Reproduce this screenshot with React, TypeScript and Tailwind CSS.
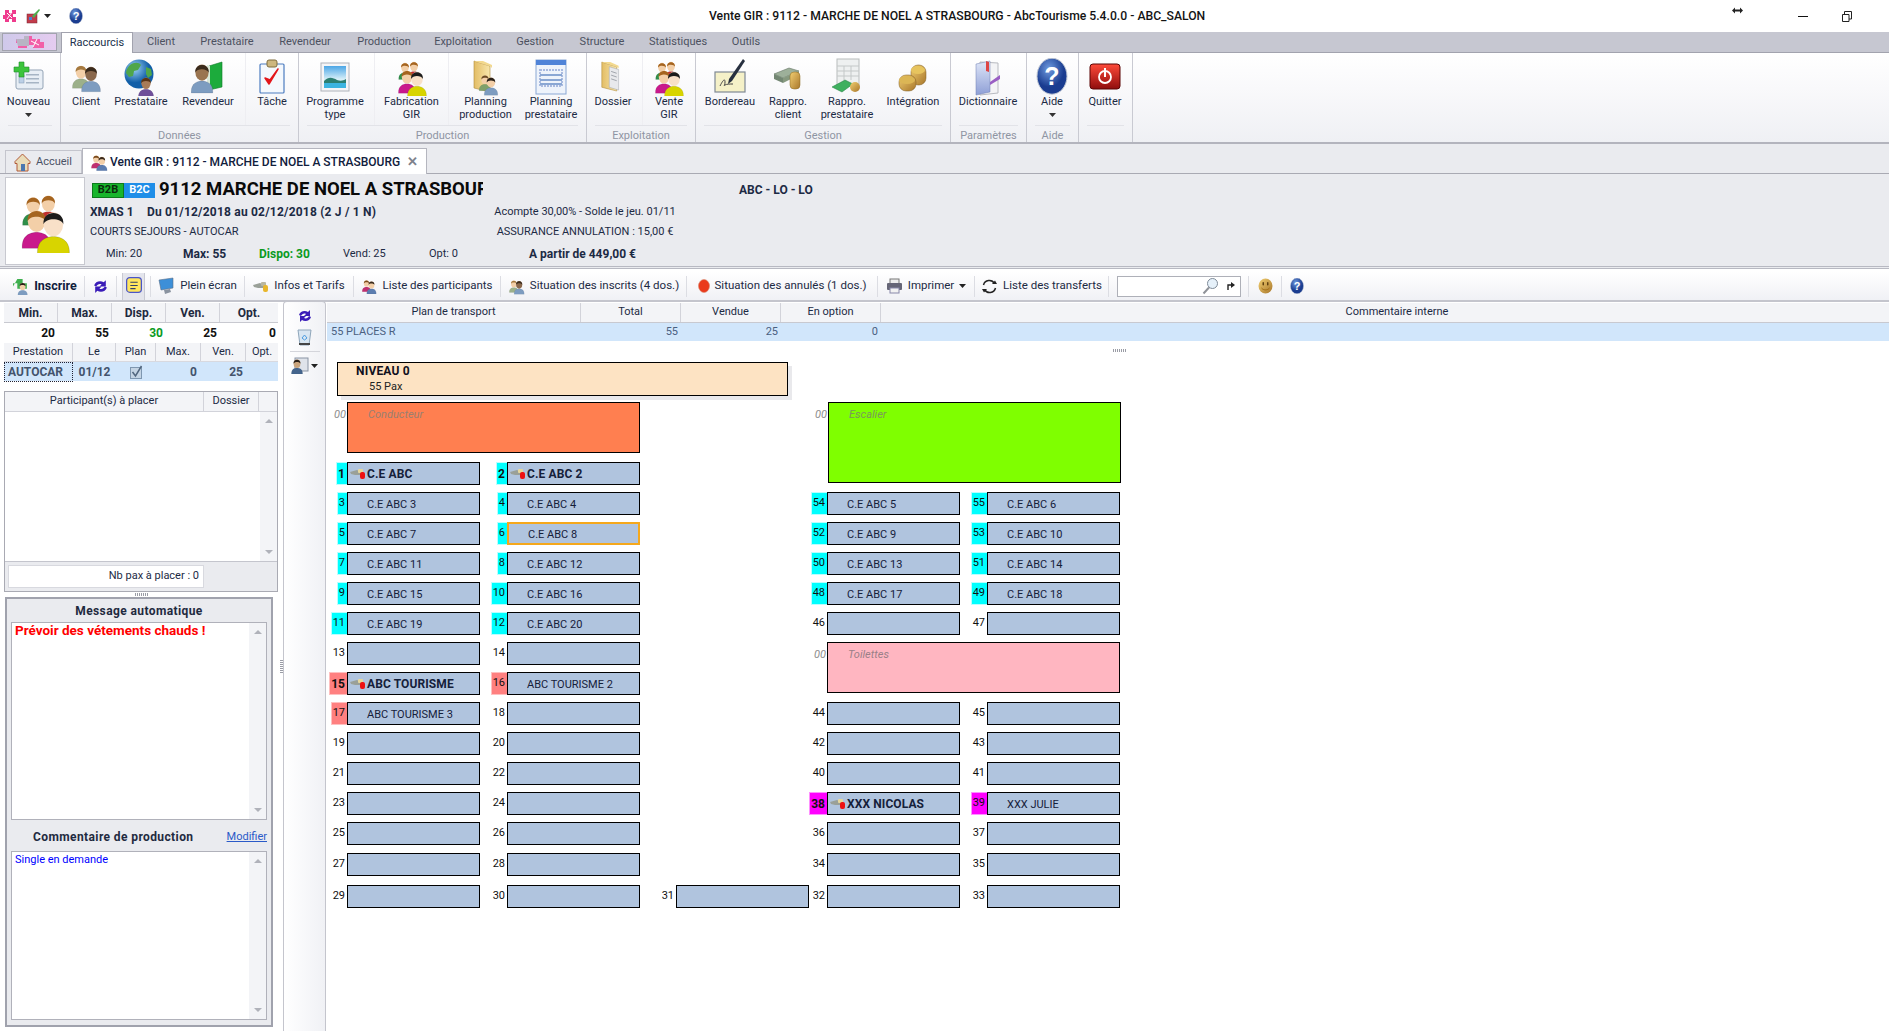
import type { ReactNode } from "react";

type P = { x: number; y: number; s?: number; shirt: string; hair: string; skin?: string };

const Person = ({ x, y, s = 1, shirt, hair, skin = "#f3cfa8" }: P) => (
  <g transform={`translate(${x} ${y}) scale(${s})`}>
    <path d="M-9 15C-9.5 7-4 5 0 5s9.500 2 9 10Z" fill={shirt} stroke="#0003" strokeWidth=".4" />
    <ellipse cx="0" cy="-2" rx="5.500" ry="6.800" fill={skin} />
    <path d="M-5.600-2C-6.500-10.500 6.500-10.500 5.600-2 4.500-5.500-4-6-5.600-2Z" fill={hair} />
  </g>
);

const Svg = ({ w = 32, h = 32, vb = "0 0 32 32", children }: { w?: number; h?: number; vb?: string; children: ReactNode }) => (
  <svg width={w} height={h} viewBox={vb} className="shrink-0">{children}</svg>
);

const IconNew = () => (
  <Svg w={32} h={32}>
    <rect x="3" y="9" width="27" height="19" rx="2" fill="#e8eef5" stroke="#93a3b5" />
    <rect x="13" y="13" width="13" height="1.500" fill="#a6b4c4" />
    <rect x="13" y="17" width="13" height="1.500" fill="#a6b4c4" />
    <rect x="13" y="21" width="13" height="1.500" fill="#a6b4c4" />
    <rect x="6" y="14" width="5" height="8" fill="#bcd0e6" stroke="#7f97b0" strokeWidth=".5" />
    <path d="M6 1h5v5h5v5h-5v5H6v-5H1V6h5Z" fill="#3cc43c" stroke="#1f8f2b" strokeWidth=".6" />
  </Svg>
);
const IconClient = ({ s = 32 }: { s?: number }) => (
  <Svg w={s} h={s}>
    <Person x={11} y={13} s={0.95} shirt="#9cb08a" hair="#a5793f" />
    <Person x={21} y={15} s={1.05} shirt="#7d9cc0" hair="#3a2a1c" skin="#8a684c" />
  </Svg>
);
const IconGlobe = () => (
  <Svg w={34} h={38} vb="0 0 34 38">
    <circle cx="15" cy="16" r="14.500" fill="url(#gGlobe)" />
    <path d="M6 7c4-3 9-3 11 0l-3 5-4 1-1 5-4 1-3-4c0-3 2-6 4-8ZM22 9l5 2 1 6-4 3-2-4Z" fill="#4fa64a" />
    <Person x={22} y={27} s={0.85} shirt="#6f4f9a" hair="#5a3416" skin="#a87b58" />
  </Svg>
);
const IconRevendeur = () => (
  <Svg w={34} h={38} vb="0 0 34 38">
    <path d="M18 8l13-4v25l-13 3Z" fill="#1cab3c" stroke="#0d7a27" strokeWidth=".6" />
    <path d="M16 7l3 1v24l-3-2Z" fill="#d8e8d8" />
    <Person x={11} y={17} s={1.2} shirt="#7d9cc0" hair="#3a2a1c" skin="#9a7450" />
  </Svg>
);
const IconTask = () => (
  <Svg w={28} h={38} vb="0 0 28 38">
    <rect x="2" y="6" width="24" height="29" rx="1" fill="#f4f8fd" stroke="#4c7cc0" strokeWidth="1.200" />
    <rect x="9" y="2" width="10" height="7" rx="2" fill="#cdb77f" stroke="#7e6c3f" />
    <path d="M7 20l4 6 9-15-8 11Z" fill="#e3161b" stroke="#e3161b" strokeWidth="1.500" strokeLinejoin="round" />
  </Svg>
);
const IconLandscape = () => (
  <Svg w={32} h={34} vb="0 0 32 34">
    <rect x="2" y="3" width="28" height="28" fill="#f5f5f7" stroke="#aeb2ba" />
    <rect x="5" y="6" width="22" height="22" fill="url(#gSky)" />
    <path d="M5 21c5-5 9-3 13-1 3 1 6 1 9-1v4H5Z" fill="#2c7f72" />
    <rect x="5" y="23" width="22" height="5" fill="#3cb4e0" />
  </Svg>
);
const IconGroup = ({ w = 32, h = 38 }: { w?: number; h?: number }) => (
  <Svg w={w} h={h} vb="0 0 32 38">
    <Person x={9} y={11} s={0.7} shirt="#2f8f4a" hair="#a5641f" />
    <Person x={18} y={10} s={0.7} shirt="#c03030" hair="#a5641f" />
    <Person x={11} y={21} s={0.95} shirt="#c9198c" hair="#a5641f" />
    <Person x={21} y={23} s={1.050} shirt="#d8d400" hair="#1c1c1c" skin="#f8e0c8" />
  </Svg>
);
const Folder = () => (
  <>
    <path d="M3 3l16 5v26L3 30Z" fill="url(#gFolder)" stroke="#b08a3a" strokeWidth=".6" />
    <path d="M3 3h9l9 4v3l-2-2Z" fill="#f3d98e" />
  </>
);
const IconFolderPeople = () => (
  <Svg w={30} h={38} vb="0 0 30 38">
    <Folder />
    <Person x={14} y={23} s={0.65} shirt="#7fa06a" hair="#6b4a22" />
    <Person x={20} y={26} s={0.75} shirt="#7d9cc0" hair="#2a2018" />
  </Svg>
);
const IconCalendar = () => (
  <Svg w={32} h={38} vb="0 0 32 38">
    <rect x="1" y="2" width="30" height="34" fill="#eef3fb" stroke="#8aa7d4" />
    <rect x="1" y="2" width="30" height="5" fill="#4f83d8" />
    <rect x="5" y="12" width="22" height="16" fill="none" stroke="#aabbe0" strokeWidth="2" strokeDasharray="2 1" />
    <rect x="5" y="16" width="22" height="2" fill="#8aa7d4" />
    <rect x="5" y="21" width="22" height="2" fill="#8aa7d4" />
    <rect x="5" y="25" width="22" height="2" fill="#8aa7d4" />
  </Svg>
);
const IconFolderDoc = () => (
  <Svg w={28} h={38} vb="0 0 30 38">
    <Folder />
    <path d="M11 8l10 3v22l-10-3Z" fill="#e8e9ec" stroke="#9ca0a8" strokeWidth=".5" />
    <path d="M13 13l6 2M13 17l6 2M13 21l6 2" stroke="#9ca0a8" />
  </Svg>
);
const IconSign = () => (
  <Svg w={34} h={38} vb="0 0 34 38">
    <rect x="2" y="14" width="30" height="20" fill="#f5f1c8" stroke="#7f8994" strokeWidth="1.200" />
    <path d="M7 28c3-6 5-8 5-4s-2 4 0 3 4-1 8-1" fill="none" stroke="#444" />
    <path d="M30 1l2 2-13 20-4 3 1-5Z" fill="#27303f" />
  </Svg>
);
const IconMoney = () => (
  <Svg w={32} h={32}>
    <path d="M2 13l15-6 10 3-16 7Z" fill="#9db09a" stroke="#637363" strokeWidth=".6" />
    <path d="M2 13l9 4v5l-9-4Z" fill="#738773" />
    <path d="M11 17l16-7v4l-16 8Z" fill="#86997f" />
    <rect x="18" y="11" width="10" height="17" rx="4" fill="url(#gGold)" stroke="#8a6a20" strokeWidth=".5" />
  </Svg>
);
const IconSheetMoney = () => (
  <Svg w={32} h={38} vb="0 0 32 38">
    <rect x="6" y="1" width="22" height="26" fill="#eef0f0" stroke="#b8bcbc" />
    <path d="M6 8h22M6 13h22M6 18h22M13 8v14M20 8v14" stroke="#c4c8c8" />
    <path d="M1 29l13-7 8 4-11 8Z" fill="#3fb05f" stroke="#1d7a3c" strokeWidth=".5" />
    <circle cx="24" cy="29" r="5" fill="url(#gGold)" />
  </Svg>
);
const IconCoins = () => (
  <Svg w={32} h={32}>
    <rect x="14" y="4" width="15" height="20" rx="7" fill="url(#gGold)" stroke="#7d5a20" strokeWidth=".5" />
    <ellipse cx="21" cy="9" rx="7" ry="4" fill="#e7c45e" />
    <rect x="2" y="14" width="17" height="16" rx="7" fill="url(#gGold)" stroke="#7d5a20" strokeWidth=".5" />
    <ellipse cx="10" cy="19" rx="8" ry="4" fill="#dcb655" />
  </Svg>
);
const IconBook = () => (
  <Svg w={32} h={38} vb="0 0 32 38">
    <path d="M8 4l18 1v30L8 37Z" fill="#f4f4f6" stroke="#b8bac0" />
    <path d="M4 6l14-3v31L4 37Z" fill="url(#gBook)" stroke="#6f7fb0" strokeWidth=".5" />
    <path d="M14 3l3 1v10l-3-1Z" fill="#dd4444" />
    <path d="M18 24l10-7v4l-10 6Z" fill="#9a5ec4" />
  </Svg>
);
const IconHelp = ({ s = 32 }: { s?: number }) => (
  <Svg w={s} h={s * 1.170} vb="0 0 32 37">
    <ellipse cx="16" cy="18" rx="15" ry="18" fill="url(#gHelp)" stroke="#c0c7d4" />
    <text x="16" y="27" textAnchor="middle" fontFamily="Liberation Sans" fontWeight="700" fontSize="25" fill="#fff">?</text>
  </Svg>
);
const IconPower = () => (
  <Svg w={32} h={28} vb="0 0 32 28">
    <rect x="1" y="1" width="30" height="25" rx="3" fill="url(#gRed)" stroke="#5a0505" />
    <circle cx="16" cy="14" r="6" fill="none" stroke="#fff" strokeWidth="1.800" />
    <path d="M16 5v9" stroke="#fff" strokeWidth="2" />
  </Svg>
);
const IconHome = () => (
  <Svg w={17} h={19} vb="0 0 17 19">
    <path d="M8.500 1L1 8.500v2h2V18h11v-7.500h2v-2Z" fill="#e9dcb8" stroke="#b05a38" />
    <rect x="7" y="11" width="4" height="7" fill="#4a78b0" />
  </Svg>
);
const IconRefresh = ({ s = 17 }: { s?: number }) => (
  <Svg w={s} h={s} vb="0 0 16 16">
    <path d="M2 7c1-4 6-5 9-3l2-2v6H7l2-2c-2-1-4 0-5 2Z" fill="#3a1cb8" />
    <path d="M14 9c-1 4-6 5-9 3l-2 2V8h6l-2 2c2 1 4 0 5-2Z" fill="#3a1cb8" />
  </Svg>
);
const IconNote = () => (
  <Svg w={18} h={20} vb="0 0 17 19">
    <rect x="1.500" y="1.500" width="14" height="14" rx="3" fill="#ffe65e" stroke="#4a55c8" strokeWidth="1.200" />
    <path d="M5 6h7M5 9h7M5 12h5" stroke="#33406a" />
  </Svg>
);
const IconMonitor = () => (
  <Svg w={17} h={18} vb="0 0 17 18">
    <path d="M1 3l14-2v10L3 13Z" fill="#3d8fd8" stroke="#5a6f88" strokeWidth=".6" />
    <path d="M6 13l6-1 1 3-6 2Z" fill="#8a93a0" />
  </Svg>
);
const IconKey = ({ red = false }: { red?: boolean }) => (
  <Svg w={16} h={11} vb="0 0 16 11">
    <path d="M0 4l7-2 4 2v3H5L1 6Z" fill="#9aa098" />
    <rect x="8" y="1" width="5" height="4" rx="1" fill={red ? "#e8d89c" : "#b9b6a0"} />
    <rect x="10" y="4" width="5" height="7" rx="2" fill={red ? "#ee1111" : "#e8b62c"} />
  </Svg>
);
const IconBadgePeople = ({ s = 16 }: { s?: number }) => (
  <Svg w={s} h={s} vb="0 0 32 32">
    <Person x={11} y={13} s={0.95} shirt="#c03070" hair="#7a4a1c" />
    <Person x={21} y={16} s={1.05} shirt="#5c7db0" hair="#3a2a1c" />
  </Svg>
);
const IconPrinter = () => (
  <Svg w={17} h={16} vb="0 0 17 16">
    <rect x="4" y="1" width="9" height="5" fill="#eee" stroke="#777" />
    <rect x="1" y="5" width="15" height="7" rx="1" fill="#667" />
    <rect x="4" y="10" width="9" height="5" fill="#f2f2f2" stroke="#88a" />
  </Svg>
);
const IconCycle = () => (
  <Svg w={17} h={17} vb="0 0 17 17">
    <path d="M2.500 7a6 6 0 0 1 11-1.500M14.500 10a6 6 0 0 1-11 1.500" fill="none" stroke="#222" strokeWidth="1.500" />
    <path d="M11 6h5l-2-3.500ZM6 11H1l2 3.500Z" fill="#222" />
  </Svg>
);
const IconSearch = () => (
  <Svg w={17} h={18} vb="0 0 17 18">
    <circle cx="10.500" cy="6.500" r="5" fill="#e6f1fa" stroke="#7f8b98" />
    <path d="M7 10.500L1.500 16.500" stroke="#8f9298" strokeWidth="2" />
  </Svg>
);
const IconGo = () => (
  <Svg w={9} h={10} vb="0 0 9 10">
    <path d="M1 9V4h3" fill="none" stroke="#222" strokeWidth="1.400" />
    <path d="M4 1l4 3-4 3Z" fill="#222" />
  </Svg>
);
const IconSmile = () => (
  <Svg w={15} h={17} vb="0 0 15 17">
    <ellipse cx="7.500" cy="8" rx="7" ry="7.500" fill="url(#gGold)" />
    <rect x="4.500" y="4" width="1.500" height="3.500" rx=".7" fill="#604010" />
    <rect x="9" y="4" width="1.500" height="3.500" rx=".7" fill="#604010" />
    <path d="M3.500 10c2 2.500 6 2.500 8 0" fill="none" stroke="#a06a10" />
  </Svg>
);
const IconTrash = () => (
  <Svg w={15} h={17} vb="0 0 15 17">
    <path d="M1 1h13l-2 15H3Z" fill="#d8e6f2" stroke="#8fa6ba" />
    <rect x="2" y="14" width="11" height="2" fill="#444" />
    <path d="M5 9l2.500-3 2.500 3-2.500 2Z" fill="none" stroke="#4a9be0" />
  </Svg>
);
const IconCard = () => (
  <Svg w={18} h={17} vb="0 0 18 17">
    <rect x="4" y="1" width="13" height="13" fill="#dfe3ea" stroke="#8a94a4" />
    <Person x={6} y={8} s={0.62} shirt="#44648c" hair="#2a2018" skin="#caa47c" />
  </Svg>
);
const IconCheck = () => (
  <Svg w={13} h={14} vb="0 0 13 14">
    <rect x=".5" y="2.500" width="11" height="11" fill="#c4d4e4" stroke="#7f97b0" />
    <path d="M2.500 7l3 4 6-10" fill="none" stroke="#51667e" strokeWidth="1.500" />
  </Svg>
);
const IconLogo = () => (
  <Svg w={16} h={16} vb="0 0 16 16">
    <path d="M3 2h4v3h3V2h4v4h-3v3h3v5h-4v-3H7v3H3v-3H1V7h2Z" fill="#ef3b8d" />
    <path d="M5 5l5 5M10 4l-5 7" stroke="#fff" />
  </Svg>
);
const IconPaint = () => (
  <Svg w={15} h={16} vb="0 0 15 16">
    <rect x="1" y="6" width="10" height="9" fill="#c23b4b" stroke="#7a2530" strokeWidth=".5" />
    <rect x="3" y="9" width="3" height="3" fill="#4f7fd0" />
    <path d="M6 8l7-7 1 1-6 8Z" fill="#4fae4f" />
  </Svg>
);
const CaretDown = ({ c = "#222" }: { c?: string }) => (
  <svg width="7" height="4" viewBox="0 0 7 4" className="shrink-0"><path d="M0 0h7L3.500 4Z" fill={c} /></svg>
);
const Grip = () => <div className="h-[3px] w-[13px] bg-[repeating-linear-gradient(90deg,#9a9ca5_0_1px,transparent_1px_2px)]" />;

const ribbonTabs = [
  ["Client", "w-[56px]"], ["Prestataire", "w-[76px]"], ["Revendeur", "w-[80px]"], ["Production", "w-[78px]"], ["Exploitation", "w-[80px]"],
  ["Gestion", "w-[64px]"], ["Structure", "w-[70px]"], ["Statistiques", "w-[82px]"], ["Outils", "w-[54px]"],
];

type RI = { l: string[]; w: string; icon: ReactNode; caret?: boolean; sep?: boolean };
const groups: { title: string; w: string; items: RI[] }[] = [
  { title: "", w: "w-[61px]", items: [{ l: ["Nouveau"], w: "w-[57px]", icon: <IconNew />, caret: true }] },
  { title: "Données", w: "w-[238px]", items: [
    { l: ["Client"], w: "w-[50px]", icon: <IconClient /> },
    { l: ["Prestataire"], w: "w-[60px]", icon: <IconGlobe /> },
    { l: ["Revendeur"], w: "w-[74px]", icon: <IconRevendeur /> },
    { l: ["Tâche"], w: "w-[53px]", icon: <IconTask />, sep: true },
  ] },
  { title: "Production", w: "w-[288px]", items: [
    { l: ["Programme", "type"], w: "w-[72px] mr-[3px]", icon: <IconLandscape /> },
    { l: ["Fabrication", "GIR"], w: "w-[74px]", icon: <IconGroup />, sep: true },
    { l: ["Planning", "production"], w: "w-[74px]", icon: <IconFolderPeople />, sep: true },
    { l: ["Planning", "prestataire"], w: "w-[58px]", icon: <IconCalendar /> },
  ] },
  { title: "Exploitation", w: "w-[109px]", items: [
    { l: ["Dossier"], w: "w-[52px] mr-[3px]", icon: <IconFolderDoc /> },
    { l: ["Vente", "GIR"], w: "w-[53px]", icon: <IconGroup />, sep: true },
  ] },
  { title: "Gestion", w: "w-[255px]", items: [
    { l: ["Bordereau"], w: "w-[68px]", icon: <IconSign /> },
    { l: ["Rappro.", "client"], w: "w-[48px]", icon: <IconMoney /> },
    { l: ["Rappro.", "prestataire"], w: "w-[70px]", icon: <IconSheetMoney /> },
    { l: ["Intégration"], w: "w-[62px]", icon: <IconCoins /> },
  ] },
  { title: "Paramètres", w: "w-[76px]", items: [{ l: ["Dictionnaire"], w: "w-[74px]", icon: <IconBook /> }] },
  { title: "Aide", w: "w-[52px]", items: [{ l: ["Aide"], w: "w-[50px]", icon: <IconHelp />, caret: true }] },
  { title: "", w: "w-[54px]", items: [{ l: ["Quitter"], w: "w-[52px]", icon: <IconPower /> }] },
];

const tools: { w: string; icon: ReactNode; label?: string; bold?: boolean; caret?: boolean; active?: boolean }[] = [
  { w: "w-[80px]", icon: <Svg w={17} h={17}><path d="M10 2h10v8h8v10H20v0H10V10H2v6Z" fill="#3fb04f" /><Person x={20} y={18} shirt="#7d9cc0" hair="#2a2018" /></Svg>, label: "Inscrire", bold: true },
  { w: "w-[32px]", icon: <IconRefresh /> },
  { w: "w-[34px]", icon: <IconNote />, active: true },
  { w: "w-[94px]", icon: <IconMonitor />, label: "Plein écran" },
  { w: "w-[109px]", icon: <IconKey />, label: "Infos et Tarifs" },
  { w: "w-[147px]", icon: <IconBadgePeople />, label: "Liste des participants" },
  { w: "w-[186px]", icon: <IconClient s={17} />, label: "Situation des inscrits (4 dos.)" },
  { w: "w-[191px]", icon: <svg width="12" height="14" viewBox="0 0 12 14"><ellipse cx="6" cy="7" rx="5.500" ry="6.500" fill="#ea3a1c" stroke="#d98a70" strokeWidth=".6" /></svg>, label: "Situation des annulés (1 dos.)" },
  { w: "w-[97px]", icon: <IconPrinter />, label: "Imprimer", caret: true },
  { w: "w-[134px]", icon: <IconCycle />, label: "Liste des transferts" },
];

type Seat = { n: number; c: number; r: number; t?: string; b?: boolean; tag?: "cyan" | "red" | "pink"; sel?: boolean };
const seats: Seat[] = [
  { n: 1, c: 1, r: 2, t: "C.E ABC", b: true, tag: "cyan" }, { n: 2, c: 2, r: 2, t: "C.E ABC 2", b: true, tag: "cyan" },
  { n: 3, c: 1, r: 3, t: "C.E ABC 3", tag: "cyan" }, { n: 4, c: 2, r: 3, t: "C.E ABC 4", tag: "cyan" },
  { n: 54, c: 4, r: 3, t: "C.E ABC 5", tag: "cyan" }, { n: 55, c: 5, r: 3, t: "C.E ABC 6", tag: "cyan" },
  { n: 5, c: 1, r: 4, t: "C.E ABC 7", tag: "cyan" }, { n: 6, c: 2, r: 4, t: "C.E ABC 8", tag: "cyan", sel: true },
  { n: 52, c: 4, r: 4, t: "C.E ABC 9", tag: "cyan" }, { n: 53, c: 5, r: 4, t: "C.E ABC 10", tag: "cyan" },
  { n: 7, c: 1, r: 5, t: "C.E ABC 11", tag: "cyan" }, { n: 8, c: 2, r: 5, t: "C.E ABC 12", tag: "cyan" },
  { n: 50, c: 4, r: 5, t: "C.E ABC 13", tag: "cyan" }, { n: 51, c: 5, r: 5, t: "C.E ABC 14", tag: "cyan" },
  { n: 9, c: 1, r: 6, t: "C.E ABC 15", tag: "cyan" }, { n: 10, c: 2, r: 6, t: "C.E ABC 16", tag: "cyan" },
  { n: 48, c: 4, r: 6, t: "C.E ABC 17", tag: "cyan" }, { n: 49, c: 5, r: 6, t: "C.E ABC 18", tag: "cyan" },
  { n: 11, c: 1, r: 7, t: "C.E ABC 19", tag: "cyan" }, { n: 12, c: 2, r: 7, t: "C.E ABC 20", tag: "cyan" },
  { n: 46, c: 4, r: 7 }, { n: 47, c: 5, r: 7 },
  { n: 13, c: 1, r: 8 }, { n: 14, c: 2, r: 8 },
  { n: 15, c: 1, r: 9, t: "ABC TOURISME", b: true, tag: "red" }, { n: 16, c: 2, r: 9, t: "ABC TOURISME 2", tag: "red" },
  { n: 17, c: 1, r: 10, t: "ABC TOURISME 3", tag: "red" }, { n: 18, c: 2, r: 10 }, { n: 44, c: 4, r: 10 }, { n: 45, c: 5, r: 10 },
  { n: 19, c: 1, r: 11 }, { n: 20, c: 2, r: 11 }, { n: 42, c: 4, r: 11 }, { n: 43, c: 5, r: 11 },
  { n: 21, c: 1, r: 12 }, { n: 22, c: 2, r: 12 }, { n: 40, c: 4, r: 12 }, { n: 41, c: 5, r: 12 },
  { n: 23, c: 1, r: 13 }, { n: 24, c: 2, r: 13 },
  { n: 38, c: 4, r: 13, t: "XXX NICOLAS", b: true, tag: "pink" }, { n: 39, c: 5, r: 13, t: "XXX JULIE", tag: "pink" },
  { n: 25, c: 1, r: 14 }, { n: 26, c: 2, r: 14 }, { n: 36, c: 4, r: 14 }, { n: 37, c: 5, r: 14 },
  { n: 27, c: 1, r: 15 }, { n: 28, c: 2, r: 15 }, { n: 34, c: 4, r: 15 }, { n: 35, c: 5, r: 15 },
  { n: 29, c: 1, r: 16 }, { n: 30, c: 2, r: 16 }, { n: 31, c: 3, r: 16 }, { n: 32, c: 4, r: 16 }, { n: 33, c: 5, r: 16 },
];

const tagClass = {
  cyan: "bg-[#00ffff] border-[#b8ffff]",
  red: "bg-[#ff8080] border-[#ffc0c0]",
  pink: "bg-[#ff00ff] border-[#ff90ff]",
};

const SeatCell = ({ s }: { s: Seat }) => (
  <div className="flex h-[23px] items-stretch justify-end" style={{ gridColumn: s.c, gridRow: s.r + 1 }}>
    <div
      className={`flex items-center justify-end pl-px pr-[2px] text-[#111] ${s.tag ? `border-l border-y ${tagClass[s.tag]}` : ""} ${s.b ? "font-bold text-[12px]" : "text-[11px]"}`}
    >
      {s.n}
    </div>
    <div
      className={`relative flex w-[133px] shrink-0 items-center whitespace-nowrap bg-[#b0c4de] pl-[19px] leading-none text-[#15203a] ${s.sel ? "border-2 border-[#f5a81c]" : "border border-black"} ${s.b ? "text-[12px] font-bold tracking-[.1px] text-[#0c1020]" : "text-[11px]"}`}
    >
      {s.b && (
        <span className="absolute left-[2px] top-[5px]"><IconKey red /></span>
      )}
      <span className="pt-px">{s.t}</span>
    </div>
  </div>
);

const Zone = ({ label, col, row, span, w, bg, h, tc }: { label: string; col: string; row: number; span: number; w: string; bg: string; h: string; tc: string }) => (
  <div className="flex items-start justify-end" style={{ gridColumn: col, gridRow: `${row + 1} / span ${span}` }}>
    <span className="pt-[5px] pr-px text-[11px] italic text-[#8d8d8d]">00</span>
    <div className={`${w} ${bg} ${h} border border-black pl-[20px] pt-[4px] text-[11px] italic ${tc}`}>{label}</div>
  </div>
);

const Scroll = () => (
  <div className="flex w-[17px] shrink-0 flex-col items-center justify-between bg-[#f3f4f7] py-[7px]">
    <div className="h-0 w-0 border-x-[4px] border-b-[4px] border-x-transparent border-b-[#b0b2ba]" />
    <div className="h-0 w-0 border-x-[4px] border-t-[4px] border-x-transparent border-t-[#b0b2ba]" />
  </div>
);

export default function App() {
  return (
    <div className="flex h-[1031px] w-[1889px] flex-col overflow-hidden bg-white font-['Roboto',sans-serif] text-[11px] text-[#1c2a44]">
      <svg className="block h-0 w-0">
        <defs>
          <radialGradient id="gGlobe" cx=".35" cy=".3"><stop offset="0" stopColor="#9fd4f5" /><stop offset="1" stopColor="#125fa8" /></radialGradient>
          <radialGradient id="gHelp" cx=".4" cy=".3"><stop offset="0" stopColor="#6f9be0" /><stop offset="1" stopColor="#1a3c90" /></radialGradient>
          <linearGradient id="gSky" x1="0" y1="0" x2="0" y2="1"><stop offset="0" stopColor="#4ba6e6" /><stop offset=".6" stopColor="#d6eef8" /></linearGradient>
          <linearGradient id="gFolder" x1="0" y1="0" x2="1" y2="0"><stop offset="0" stopColor="#e3bd65" /><stop offset="1" stopColor="#f8e6ac" /></linearGradient>
          <linearGradient id="gGold" x1="0" y1="0" x2="1" y2="1"><stop offset="0" stopColor="#f2cf72" /><stop offset="1" stopColor="#a8762a" /></linearGradient>
          <linearGradient id="gBook" x1="0" y1="0" x2="0" y2="1"><stop offset="0" stopColor="#dfe6f8" /><stop offset="1" stopColor="#8e9fd6" /></linearGradient>
          <linearGradient id="gRed" x1="0" y1="0" x2="0" y2="1"><stop offset="0" stopColor="#ff4a3a" /><stop offset="1" stopColor="#8f0d0d" /></linearGradient>
        </defs>
      </svg>

      {/* title bar */}
      <div className="flex h-[32px] shrink-0 items-center">
        <div className="flex w-[709px] items-center pl-[2px]">
          <IconLogo />
          <div className="ml-2"><IconPaint /></div>
          <div className="ml-[3px]"><CaretDown /></div>
          <div className="ml-[18px]"><IconHelp s={14} /></div>
        </div>
        <div className="w-[500px] text-[12.200px] font-medium whitespace-nowrap text-[#141414]">Vente GIR : 9112 - MARCHE DE NOEL A STRASBOURG - AbcTourisme 5.4.0.0 - ABC_SALON</div>
        <svg width="11" height="7" viewBox="0 0 11 7" className="mb-3 ml-[523px]"><path d="M0 3.500L3 .5v2h5v-2l3 3-3 3v-2H3v2Z" fill="#222" /></svg>
        <div className="ml-[55px] h-px w-[10px] bg-[#111]" />
        <svg width="10" height="11" viewBox="0 0 10 11" className="ml-[34px]"><path d="M.5 3.500h6.500v7H.5ZM2.500 3.500V.5h7v7.500H7" fill="none" stroke="#222" /></svg>
      </div>

      {/* ribbon tabs */}
      <div className="flex h-[21px] shrink-0 items-end border-b border-[#a2a3ae] bg-[#c6c7d1] text-[#4c5160]">
        <div className="mb-[1px] ml-[2px] flex h-[18px] w-[55px] items-center justify-center border border-[#a2a3ae] bg-[linear-gradient(90deg,#cfc9ea,#e5ccf0)]"><Svg w={34} h={16} vb="0 0 34 16"><path d="M3 5h8V2h8v3h8v3h4v6H20v-3h-6v3H5V9H3Z" fill="#f25fa8" /><path d="M3 5h8V2h5v10H5Z" fill="#b8b4c4" /><path d="M18 7l8 4M24 5l-4 8" stroke="#fff" /></Svg></div>
        <div className="relative top-px ml-1 flex h-[21px] w-[72px] items-center justify-center border-x border-t border-[#a2a3ae] bg-white pt-px text-[#20304c]">Raccourcis</div>
        {ribbonTabs.map(([t, w]) => (
          <div key={t} className={`flex h-[20px] items-center justify-center pt-px ${w}`}>{t}</div>
        ))}
      </div>

      {/* ribbon */}
      <div className="flex h-[91px] shrink-0 border-b-2 border-[#b3b4bd] bg-[linear-gradient(#ffffff,#f9f9fb_40%,#eff0f4)]">
        {groups.map((g, i) => (
          <div key={i} className={`flex flex-col border-r border-[#c9cad2] ${g.w}`}>
            <div className="flex h-[72px] shrink-0">
              {g.items.map((it) => (
                <div key={it.l[0] + it.l[1]} className={`flex flex-col items-center pt-[5px] leading-[13px] whitespace-nowrap ${it.w} ${it.sep ? "border-l border-[#eeeef2]" : ""}`}>
                  <div className="flex h-[37px] items-center justify-center">{it.icon}</div>
                  {it.l.map((t) => <div key={t}>{t}</div>)}
                  {it.caret && <div className="mt-[5px]"><CaretDown c="#333" /></div>}
                </div>
              ))}
            </div>
            <div className="mx-2 h-px shrink-0 bg-[#e2e3e8]" />
            <div className="flex flex-1 items-center justify-center pt-[2px] text-[#8f95a3]">{g.title}</div>
          </div>
        ))}
      </div>

      {/* document tabs */}
      <div className="flex h-[30px] shrink-0 items-end border-b border-[#a9aab3] bg-[#eaebef]">
        <div className="ml-[5px] flex h-[23px] w-[77px] items-center gap-[5px] border-x border-t border-[#c4c5cd] pl-2 text-[#4a5266]"><IconHome /> Accueil</div>
        <div className="relative top-px flex h-[26px] w-[345px] items-center border-x border-t border-[#b5b6bf] bg-white pl-[7px] font-medium text-[#10203c]">
          <IconBadgePeople s={18} />
          <span className="ml-[2px] text-[12px] whitespace-nowrap">Vente GIR : 9112 - MARCHE DE NOEL A STRASBOURG</span>
          <span className="ml-auto mr-[8px] text-[13px] font-bold text-[#7e828c]">✕</span>
        </div>
      </div>

      {/* sale header */}
      <div className="flex h-[95px] shrink-0 border-b-[3px] border-double border-[#b8b9c2] bg-[#eaebef] pl-[5px] pt-[3px]">
        <div className="flex h-[88px] w-[80px] shrink-0 items-center justify-center border border-[#c8c9d0] bg-white"><IconGroup w={54} h={64} /></div>
        <div className="ml-[5px] flex flex-col">
          <div className="flex h-[26px] items-center pl-[2px]">
            <div className="flex h-[15px] w-[32px] items-center justify-center border border-[#0d7a1c] bg-[#18b52c] text-[11px] font-bold text-[#0b2a0c]">B2B</div>
            <div className="flex h-[15px] w-[31px] items-center justify-center bg-[#1f8ee8] text-[11px] font-bold text-white">B2C</div>
            <div className="ml-[4px] w-[324px] overflow-hidden text-[18.500px] font-bold whitespace-nowrap text-[#0a0a0a]">9112 MARCHE DE NOEL A STRASBOURG</div>
            <div className="ml-[256px] text-[12px] font-bold whitespace-nowrap">ABC - LO - LO</div>
          </div>
          <div className="flex h-[18px] items-center">
            <div className="w-[57px] text-[12px] font-bold">XMAS 1</div>
            <div className="w-[338px] text-[12px] font-bold tracking-[.2px]">Du 01/12/2018 au 02/12/2018 (2 J / 1 N)</div>
            <div className="w-[200px] text-center">Acompte 30,00% - Solde le jeu. 01/11</div>
          </div>
          <div className="flex h-[22px] items-center">
            <div className="w-[395px]">COURTS SEJOURS - AUTOCAR</div>
            <div className="w-[200px] text-center whitespace-nowrap">ASSURANCE ANNULATION : 15,00 €</div>
          </div>
          <div className="flex h-[22px] items-center pl-[16px]">
            <div className="w-[77px]">Min: 20</div>
            <div className="w-[76px] text-[12px] font-bold">Max: 55</div>
            <div className="w-[84px] text-[12px] font-bold text-[#0a9a1e]">Dispo: 30</div>
            <div className="w-[86px]">Vend: 25</div>
            <div className="w-[100px]">Opt: 0</div>
            <div className="text-[12px] font-bold whitespace-nowrap">A partir de 449,00 €</div>
          </div>
        </div>
      </div>

      {/* toolbar */}
      <div className="mt-[3px] flex h-[30px] shrink-0 items-center border-b-2 border-[#c4c5cd] bg-[linear-gradient(#ffffff,#f0f1f5)] pl-[5px] text-[11.500px]">
        {tools.map((t, i) => (
          <div key={i} className={`flex h-[21px] items-center justify-center gap-[5px] border-r border-[#dcdde3] whitespace-nowrap ${t.w}`}>
            {t.active ? <div className="flex h-[27px] w-[23px] items-center justify-center border-x border-[#c8c9d2] bg-[#e4e5ec]">{t.icon}</div> : t.icon}
            {t.label && <span className={t.bold ? "text-[12.500px] font-bold text-[#10203c]" : ""}>{t.label}</span>}
            {t.caret && <CaretDown />}
          </div>
        ))}
        <div className="flex h-[21px] w-[140px] items-center border-r border-[#dcdde3] pl-[8px]">
          <div className="flex h-[21px] w-[124px] items-center justify-end gap-[8px] border border-[#aeb0b8] bg-white pr-[4px]"><IconSearch /><IconGo /></div>
        </div>
        <div className="flex h-[21px] w-[33px] items-center justify-center border-r border-[#dcdde3]"><IconSmile /></div>
        <div className="ml-[8px]"><IconHelp s={14} /></div>
      </div>

      {/* body */}
      <div className="flex min-h-0 flex-1">
        {/* left column */}
        <div className="flex w-[283px] shrink-0 flex-col pl-[4px] pt-px">
          <div className="w-[274px]">
            <div className="grid h-[20px] grid-cols-[54px_54px_54px_54px_58px] border-b border-[#c8c9d0] bg-[#f3f4f7] text-[12px] font-bold text-[#1f2a40]">
              {["Min.", "Max.", "Disp.", "Ven.", "Opt."].map((t) => (
                <div key={t} className="flex items-center justify-center border-r border-[#d2d3da] last:border-r-0">{t}</div>
              ))}
            </div>
            <div className="grid h-[20px] grid-cols-[54px_54px_54px_54px_58px] items-center text-right text-[12px] font-bold text-[#111]">
              <div className="pr-[3px]">20</div><div className="pr-[3px]">55</div><div className="pr-[3px] text-[#0a9a1e]">30</div><div className="pr-[3px]">25</div><div className="pr-[2px]">0</div>
            </div>
            <div className="grid h-[19px] grid-cols-[69px_43px_40px_45px_45px_32px] border-b border-[#d8d9df] bg-[#f3f4f7]">
              {["Prestation", "Le", "Plan", "Max.", "Ven.", "Opt."].map((t) => (
                <div key={t} className="flex items-center justify-center border-r border-[#d2d3da] last:border-r-0">{t}</div>
              ))}
            </div>
            <div className="grid h-[19px] grid-cols-[69px_43px_40px_45px_45px_32px] items-center bg-[#d1e6fb] text-[12px] font-bold text-[#43536c]">
              <div className="flex h-full items-center border border-dotted border-[#223] pl-[3px]">AUTOCAR</div>
              <div className="text-center">01/12</div>
              <div className="flex justify-center"><IconCheck /></div>
              <div className="pr-[4px] text-right">0</div>
              <div className="pr-[3px] text-right">25</div>
              <div />
            </div>
          </div>

          <div className="mt-[10px] flex h-[201px] w-[274px] shrink-0 flex-col border border-[#a9aab3]">
            <div className="flex h-[20px] shrink-0 border-b border-[#d2d3da] bg-[#f3f4f7]">
              <div className="flex w-[199px] items-center justify-center border-r border-[#d2d3da]">Participant(s) à placer</div>
              <div className="flex w-[55px] items-center justify-center border-r border-[#d2d3da]">Dossier</div>
            </div>
            <div className="flex flex-1 justify-end border-b border-[#c4c5cd]"><Scroll /></div>
            <div className="flex h-[29px] shrink-0 items-center bg-[#eaebef] pl-[3px]">
              <div className="flex h-[23px] w-[196px] items-center justify-end border border-[#d8d9df] bg-white pr-[4px]">Nb pax à placer : 0</div>
            </div>
          </div>
          <div className="flex h-[5px] w-[274px] shrink-0 items-center justify-center"><Grip /></div>

          <div className="ml-px flex h-[430px] w-[268px] shrink-0 flex-col border-2 border-[#a0a2ad] bg-[#eaebef] px-[4px]">
            <div className="flex h-[23px] shrink-0 items-center justify-center text-[12px] font-bold tracking-[.4px] text-[#1f2a40]">Message automatique</div>
            <div className="flex h-[198px] shrink-0 border border-[#b0b1ba] bg-white">
              <div className="flex-1 pl-[3px] text-[13.500px] leading-[15px] font-bold text-[#ff0000]">Prévoir des vétements chauds !</div>
              <Scroll />
            </div>
            <div className="flex h-[31px] shrink-0 items-center pt-[3px]">
              <div className="ml-[22px] text-[12px] font-bold tracking-[.4px] text-[#1f2a40]">Commentaire de production</div>
              <div className="ml-auto text-[#2a5ac8] underline">Modifier</div>
            </div>
            <div className="flex h-[169px] shrink-0 border border-[#b0b1ba] bg-white">
              <div className="flex-1 pl-[3px] text-[#0000ff]">Single en demande</div>
              <Scroll />
            </div>
          </div>
        </div>

        {/* tool strip */}
        <div className="-mt-px flex w-[43px] shrink-0 flex-col items-center rounded-t border-x border-t border-[#c4c5cd] bg-[linear-gradient(90deg,#ffffff,#f0f1f5)] pt-[6px]">
          <IconRefresh s={16} />
          <div className="mt-[5px]"><IconTrash /></div>
          <div className="mt-[5px] h-px w-[30px] bg-[#d4d5db]" />
          <div className="mt-[5px] flex items-center gap-[2px]"><IconCard /><CaretDown /></div>
        </div>

        {/* transport plan */}
        <div className="ml-px flex min-w-0 flex-1 flex-col pt-px">
          <div className="grid h-[20px] shrink-0 grid-cols-[254px_100px_100px_100px_1fr] border-b border-[#c8c9d0] bg-[#f3f4f7]">
            {["Plan de transport", "Total", "Vendue", "En option"].map((t) => (
              <div key={t} className="flex items-center justify-center border-r border-[#d2d3da]">{t}</div>
            ))}
            <div className="flex w-[1032px] items-center justify-center">Commentaire interne</div>
          </div>
          <div className="grid h-[18px] shrink-0 grid-cols-[254px_100px_100px_100px_1fr] items-center bg-[#d1e6fb] text-[#4a6080]">
            <div className="pl-[4px]">55 PLACES R</div>
            <div className="pr-[3px] text-right">55</div>
            <div className="pr-[3px] text-right">25</div>
            <div className="pr-[3px] text-right">0</div>
          </div>
          <div className="mt-[8px] ml-[786px] h-[3px]"><Grip /></div>

          <div className="mt-[10px] ml-[10px] flex h-[34px] w-[451px] shrink-0 flex-col justify-center border border-black bg-[#fde3c3] pl-[18px] leading-[16px] shadow-[4px_4px_0_#e9e9ec]">
            <div className="text-[12px] font-bold tracking-[.2px] text-[#101020]">NIVEAU 0</div>
            <div className="pl-[13px] text-[#222]">55 Pax</div>
          </div>

          <div className="mt-[6px] grid grid-cols-[153px_160px_169px_151px_160px] grid-rows-[repeat(14,30px)_31px_32px_23px]">
            <Zone label="Conducteur" col="1 / span 2" row={0} span={2} w="w-[293px]" bg="bg-[#ff7f50]" h="h-[51px]" tc="text-[#9a8070]" />
            <Zone label="Escalier" col="4 / span 2" row={0} span={3} w="w-[293px] -mr-px" bg="bg-[#7fff00]" h="h-[81px]" tc="text-[#7a9a5a]" />
            <Zone label="Toilettes" col="4 / span 2" row={8} span={2} w="w-[293px]" bg="bg-[#ffb6c1]" h="h-[51px]" tc="text-[#9a8088]" />
            {seats.map((s) => <SeatCell key={s.n} s={s} />)}
          </div>
        </div>

        {/* splitter grip, sits over the boundary of the left column */}
        <div className="absolute left-[280px] top-[660px] h-[13px] w-[3px] bg-[repeating-linear-gradient(#9a9ca5_0_1px,transparent_1px_2px)]" />
      </div>
    </div>
  );
}
